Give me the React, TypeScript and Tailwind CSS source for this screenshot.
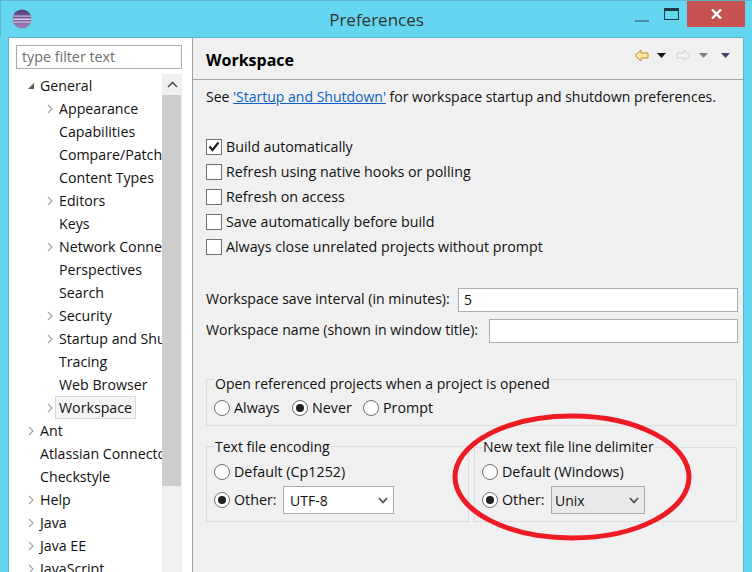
import type { ReactNode } from 'react';

const treeRows: { label: string; level: number; arrow?: 'open' | 'closed'; selected?: boolean }[] = [
  { label: 'General', level: 0, arrow: 'open' },
  { label: 'Appearance', level: 1, arrow: 'closed' },
  { label: 'Capabilities', level: 1 },
  { label: 'Compare/Patch', level: 1 },
  { label: 'Content Types', level: 1 },
  { label: 'Editors', level: 1, arrow: 'closed' },
  { label: 'Keys', level: 1 },
  { label: 'Network Connections', level: 1, arrow: 'closed' },
  { label: 'Perspectives', level: 1 },
  { label: 'Search', level: 1 },
  { label: 'Security', level: 1, arrow: 'closed' },
  { label: 'Startup and Shutdown', level: 1, arrow: 'closed' },
  { label: 'Tracing', level: 1 },
  { label: 'Web Browser', level: 1 },
  { label: 'Workspace', level: 1, arrow: 'closed', selected: true },
  { label: 'Ant', level: 0, arrow: 'closed' },
  { label: 'Atlassian Connector', level: 0 },
  { label: 'Checkstyle', level: 0 },
  { label: 'Help', level: 0, arrow: 'closed' },
  { label: 'Java', level: 0, arrow: 'closed' },
  { label: 'Java EE', level: 0, arrow: 'closed' },
  { label: 'JavaScript', level: 0, arrow: 'closed' },
];

const checks = [
  { label: 'Build automatically', checked: true },
  { label: 'Refresh using native hooks or polling' },
  { label: 'Refresh on access' },
  { label: 'Save automatically before build' },
  { label: 'Always close unrelated projects without prompt' },
];

function TreeArrow({ kind }: { kind?: 'open' | 'closed' }) {
  if (kind === 'open') {
    return (
      <svg width="8" height="8" viewBox="0 0 8 8" className="mr-[5px] ml-[1px] shrink-0">
        <path d="M1 7 L7 7 L7 1 Z" fill="#595959" />
      </svg>
    );
  }
  if (kind === 'closed') {
    return (
      <svg width="8" height="10" viewBox="0 0 8 10" className="mr-[5px] ml-[1px] shrink-0">
        <path d="M2 1 L6 5 L2 9" fill="none" stroke="#a6a6a6" strokeWidth="1.2" />
      </svg>
    );
  }
  return <span className="mr-[5px] ml-[1px] w-[8px] shrink-0" />;
}

function Tree() {
  return (
    <div className="min-w-0 flex-1 overflow-hidden text-[14.2px]">
      {treeRows.map((row) => (
        <div
          key={row.label}
          className={`flex h-[23px] items-center whitespace-nowrap ${row.level === 1 ? 'pl-[29px]' : 'pl-[10px]'}`}
        >
          <TreeArrow kind={row.arrow} />
          <span
            className={
              row.selected
                ? '-ml-[4px] border border-[#d9d9d9] bg-[#f5f5f5] px-[3px] leading-[21px]'
                : 'leading-[23px]'
            }
          >
            {row.label}
          </span>
        </div>
      ))}
    </div>
  );
}

function Scrollbar() {
  return (
    <div className="flex w-[20px] shrink-0 flex-col bg-[#f0f0f0]">
      <div className="flex h-[21px] items-center justify-center">
        <svg width="11" height="7" viewBox="0 0 11 7">
          <path d="M1 6 L5.5 1.5 L10 6" fill="none" stroke="#505050" strokeWidth="1.6" />
        </svg>
      </div>
      <div className="h-[391px] w-[19px] bg-[#cdcdcd]" />
    </div>
  );
}

function CheckRow({ label, checked }: { label: string; checked?: boolean }) {
  return (
    <div className="flex h-[25px] items-center text-[14.25px]">
      <span className="mr-[4px] flex h-[16px] w-[16px] items-center justify-center border border-[#707070] bg-white">
        {checked && (
          <svg width="12" height="11" viewBox="0 0 12 11">
            <path d="M1.5 5.5 L4.5 9 L10.5 1.5" fill="none" stroke="#222" strokeWidth="2.2" />
          </svg>
        )}
      </span>
      {label}
    </div>
  );
}

function Radio({ label, checked, className }: { label: string; checked?: boolean; className?: string }) {
  return (
    <span className={`flex items-center text-[14.3px] ${className ?? ''}`}>
      <span className="mr-[4px] flex h-[16px] w-[16px] items-center justify-center rounded-full border border-[#707070] bg-white">
        {checked && <span className="h-[8px] w-[8px] rounded-full bg-[#222]" />}
      </span>
      <span className="pb-[1px]">{label}</span>
    </span>
  );
}

function Group({
  title,
  titleClass,
  className,
  children,
}: {
  title: string;
  titleClass: string;
  className?: string;
  children: ReactNode;
}) {
  return (
    <div className={`border border-[#dcdcdc] pl-[7px] ${className ?? ''}`}>
      <div className={`w-fit bg-[#f0f0f0] px-[1px] leading-[20px] whitespace-nowrap ${titleClass}`}>{title}</div>
      {children}
    </div>
  );
}

function Caret() {
  return (
    <svg width="10" height="7" viewBox="0 0 10 7">
      <path d="M1 1 L5 5.5 L9 1" fill="none" stroke="#505050" strokeWidth="1.8" />
    </svg>
  );
}

function NavArrows() {
  return (
    <div className="flex items-center pr-[12px] pb-[8px]">
      <svg width="15" height="13" viewBox="0 0 15 13" className="mr-[8px]">
        <path d="M7 1 L1 6.5 L7 12 V9 H14 V4 H7 Z" fill="#fce9a8" stroke="#c08a20" />
      </svg>
      <svg width="10" height="5" viewBox="0 0 10 5" className="mr-[9px]">
        <path d="M0 0 H9 L4.5 5 Z" fill="#111" />
      </svg>
      <svg width="15" height="13" viewBox="0 0 15 13" className="mr-[8px]">
        <path d="M8 1 L14 6.5 L8 12 V9 H1 V4 H8 Z" fill="#f0f0f0" stroke="#d0d0d0" />
      </svg>
      <svg width="10" height="5" viewBox="0 0 10 5" className="mr-[12px]">
        <path d="M0 0 H9 L4.5 5 Z" fill="#808080" />
      </svg>
      <svg width="10" height="5" viewBox="0 0 10 5">
        <path d="M0 0 H9 L4.5 5 Z" fill="#4b3f72" />
      </svg>
    </div>
  );
}

function WindowButtons() {
  return (
    <div className="flex h-[27px] items-start justify-end pr-[7px]">
      <div className="flex h-[27px] w-[28px] items-end justify-center pb-[6px]">
        <span className="h-[2px] w-[14px] bg-[#4a8ea0]" />
      </div>
      <div className="flex h-[27px] w-[30px] items-start justify-center pt-[7px]">
        <span className="h-[12px] w-[15px] border border-t-[3px] border-[#1f3a45]" />
      </div>
      <div className="ml-[1px] flex h-[26px] w-[58px] items-center justify-center bg-[#c75050]">
        <svg width="11" height="10" viewBox="0 0 11 10">
          <path d="M1 0.5 L10 9.5 M10 0.5 L1 9.5" stroke="#fff" strokeWidth="2.4" />
        </svg>
      </div>
    </div>
  );
}

function EclipseLogo() {
  return (
    <svg width="20" height="20" viewBox="0 0 20 20" className="mt-[8px] ml-[11px]">
      <defs>
        <clipPath id="logoClip">
          <circle cx="10" cy="10" r="9.5" />
        </clipPath>
        <linearGradient id="logoFill" x1="0" y1="0" x2="0" y2="1">
          <stop offset="0" stopColor="#4f3d78" />
          <stop offset="0.5" stopColor="#7a5a9c" />
          <stop offset="1" stopColor="#a47fbe" />
        </linearGradient>
      </defs>
      <circle cx="10" cy="10" r="9.5" fill="url(#logoFill)" />
      <g clipPath="url(#logoClip)">
        <rect x="0" y="6.5" width="20" height="1.2" fill="#c9bcdc" />
        <rect x="0" y="9.5" width="20" height="1.4" fill="#e2d9ec" />
        <rect x="0" y="12.5" width="20" height="1.2" fill="#d2c4e0" />
      </g>
    </svg>
  );
}

export default function App() {
  return (
    <div className="relative flex h-[572px] w-[752px] flex-col overflow-hidden bg-[#65d6ef] font-['Open_Sans',sans-serif] text-[14px] text-[#111]">
      <div className="flex h-[37px] shrink-0 border-t border-l border-[#5fb4cc]">
        <div className="flex-1">
          <EclipseLogo />
        </div>
        <div className="pt-[8px] text-[17px] leading-[22px] text-[#333]">Preferences</div>
        <div className="flex-1">
          <WindowButtons />
        </div>
      </div>

      <div className="mx-[8px] flex min-h-0 flex-1 border-t border-r border-l border-[#5fb4cc] bg-[#f0f0f0]">
        <div className="flex w-[183px] shrink-0 flex-col bg-white pt-[7px] pl-[7px]">
          <div className="h-[24px] w-[166px] shrink-0 border border-[#a9a9a9] px-[5px] text-[14.3px] leading-[22px] text-[#6d6d6d]">
            type filter text
          </div>
          <div className="mt-[5px] flex min-h-0 flex-1 pr-[10px]">
            <Tree />
            <Scrollbar />
          </div>
        </div>

        <div className="flex min-w-0 flex-1 flex-col border-l border-[#a0a0a0]">
          <div className="flex h-[42px] shrink-0 items-center justify-between border-b border-[#a8a8a8] pt-[2px] pl-[13px]">
            <span className="text-[16px] font-bold text-black">Workspace</span>
            <NavArrows />
          </div>

          <div className="pr-[5px] pl-[13px]">
            <div className="mt-[6px] h-[22px] leading-[22px]">
              See{' '}
              <a className="text-[#0b62c4] underline">'Startup and Shutdown'</a> for workspace startup and shutdown
              preferences.
            </div>

            <div className="mt-[26px]">
              {checks.map((c) => (
                <CheckRow key={c.label} label={c.label} checked={c.checked} />
              ))}
            </div>

            <div className="mt-[29px] flex h-[24px] items-center">
              <span className="w-[252px] pb-[2px] text-[14.1px]">Workspace save interval (in minutes):</span>
              <div className="h-[24px] flex-1 border border-[#abadb3] bg-white px-[5px] leading-[22px]">5</div>
            </div>
            <div className="mt-[7px] flex h-[24px] items-center">
              <span className="w-[283px] pb-[2px] text-[14.1px]">Workspace name (shown in window title):</span>
              <div className="h-[24px] flex-1 border border-[#abadb3] bg-white" />
            </div>

            <Group
              title="Open referenced projects when a project is opened"
              titleClass="-mt-[6px]"
              className="mt-[36px] mr-[1px] h-[47px]"
            >
              <div className="mt-[2px] flex h-[24px] items-center">
                <Radio label="Always" className="w-[78px]" />
                <Radio label="Never" checked className="w-[71px]" />
                <Radio label="Prompt" />
              </div>
            </Group>

            <div className="mt-[20px] flex items-start gap-[5px]">
              <Group title="Text file encoding" titleClass="-mt-[10px]" className="h-[76px] w-[263px]">
                <div className="mt-[3px] flex h-[24px] items-center">
                  <Radio label="Default (Cp1252)" />
                </div>
                <div className="mt-[2px] flex h-[28px] items-center">
                  <Radio label="Other:" checked className="w-[69px]" />
                  <div className="flex h-[28px] w-[111px] items-center justify-between border border-[#a9a9a9] bg-white pr-[5px] pl-[6px]">
                    UTF-8
                    <Caret />
                  </div>
                </div>
              </Group>
              <Group title="New text file line delimiter" titleClass="-mt-[11px]" className="mt-[1px] h-[75px] w-[263px]">
                <div className="mt-[3px] flex h-[24px] items-center">
                  <Radio label="Default (Windows)" />
                </div>
                <div className="mt-[2px] flex h-[28px] items-center">
                  <Radio label="Other:" checked className="w-[69px]" />
                  <div className="flex h-[28px] w-[94px] items-center justify-between border border-[#a9a9a9] bg-[#e9e9e9] pr-[5px] pl-[3px]">
                    Unix
                    <Caret />
                  </div>
                </div>
              </Group>
            </div>
          </div>
        </div>
      </div>

      <svg width="752" height="572" viewBox="0 0 752 572" className="pointer-events-none absolute top-0 left-0">
        <ellipse cx="572" cy="477" rx="117" ry="61" fill="none" stroke="#ed1c24" strokeWidth="5" />
      </svg>
    </div>
  );
}
